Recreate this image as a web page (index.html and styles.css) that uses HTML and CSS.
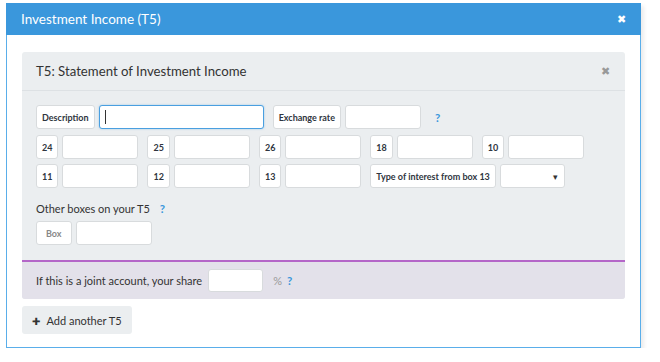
FILE: index.html
```html
<!DOCTYPE html>
<html lang="en">
<head>
    <meta charset="UTF-8">
    <meta name="viewport" content="width=device-width, initial-scale=1.0">
    <title>Investment Income (T5)</title>
    <link rel="stylesheet" href="styles.css">
</head>
<body>
    <div class="dialog">
        <div class="dialog-header">
            <span class="dialog-title">Investment Income (T5)</span>
            <span class="close">&#x2716;</span>
        </div>
        <div class="dialog-body">
            <div class="panel">
                <div class="panel-header">
                    <span>T5: Statement of Investment Income</span>
                    <span class="close grey">&#x2716;</span>
                </div>
                <div class="panel-body">
                    <div class="row first">
                        <div class="group">
                            <span class="tag">Description</span>
                            <span class="field wide focus"><span class="caret"></span></span>
                        </div>
                        <div class="group">
                            <span class="tag">Exchange rate</span>
                            <span class="field"></span>
                        </div>
                        <span class="help">?</span>
                    </div>
                    <div class="row">
                        <div class="group"><span class="tag">24</span><span class="field"></span></div>
                        <div class="group"><span class="tag">25</span><span class="field"></span></div>
                        <div class="group"><span class="tag">26</span><span class="field"></span></div>
                        <div class="group"><span class="tag">18</span><span class="field"></span></div>
                        <div class="group"><span class="tag">10</span><span class="field"></span></div>
                    </div>
                    <div class="row">
                        <div class="group"><span class="tag">11</span><span class="field"></span></div>
                        <div class="group"><span class="tag">12</span><span class="field"></span></div>
                        <div class="group"><span class="tag">13</span><span class="field"></span></div>
                        <div class="group">
                            <span class="tag">Type of interest from box 13</span>
                            <span class="field select"><span class="arrow">&#9662;</span></span>
                        </div>
                    </div>
                    <div class="other">Other boxes on your T5 <span class="help">?</span></div>
                    <div class="row last">
                        <div class="group"><span class="tag muted">Box</span><span class="field"></span></div>
                    </div>
                </div>
                <div class="panel-footer">
                    <span>If this is a joint account, your share</span>
                    <span class="field share"></span>
                    <span class="pct">%</span>
                    <span class="help">?</span>
                </div>
            </div>
            <button class="add-btn"><span class="plus">&#x271A;</span> Add another T5</button>
        </div>
    </div>
</body>
</html>
```

FILE: styles.css
```css
body {
    margin: 0;
    padding: 3px 0 0 6px;
    font-family: Lato, "Open Sans", sans-serif;
    background: #fff;
    color: #333;
}

.dialog {
    width: 635px;
    height: 345px;
    border: 1px solid #5aaeea;
    border-top: none;
    box-shadow: 3px 3px 4px rgba(0,0,0,0.08);
    box-sizing: border-box;
    display: flex;
    flex-direction: column;
}

.dialog-header {
    background: #3a97dc;
    color: #fff;
    height: 32px;
    display: flex;
    align-items: center;
    justify-content: space-between;
    padding: 0 15px 0 15px;
    margin: 0 -1px;
}

.dialog-title {
    font-size: 13.5px;
}

.close {
    font-size: 11px;
    color: #fff;
}

.close.grey {
    color: #999;
}

.dialog-body {
    padding: 17px 15px 0 15px;
}

.panel {
    background: #ebeef0;
    border-radius: 3px;
}

.panel-header {
    height: 38px;
    display: flex;
    align-items: center;
    justify-content: space-between;
    padding: 0 15px 0 14px;
    font-size: 13.2px;
    border-bottom: 1px solid #dde1e4;
}

.panel-body {
    padding: 14px 14px 15px 14px;
}

.row {
    display: flex;
    align-items: center;
    margin-bottom: 5px;
}

.row.first {
    margin-bottom: 6px;
}

.row.last {
    margin-bottom: 0;
}

.group {
    display: flex;
    gap: 4px;
    margin-right: 9px;
}

.tag {
    height: 24px;
    box-sizing: border-box;
    padding: 0 5px;
    background: #fff;
    border: 1px solid #d8dbdd;
    border-radius: 3px;
    font-size: 9px;
    font-weight: bold;
    color: #2f3540;
    display: flex;
    align-items: center;
}

.tag.muted {
    color: #888;
    padding: 0 9px;
}

.field {
    width: 76px;
    height: 24px;
    box-sizing: border-box;
    background: #fff;
    border: 1px solid #d8dbdd;
    border-radius: 3px;
    display: flex;
    align-items: center;
}

.field.wide {
    width: 165px;
}

.field.focus {
    border-color: #4a9fe0;
    box-shadow: 0 0 2px rgba(74,159,224,0.5);
}

.caret {
    width: 1px;
    height: 14px;
    background: #333;
    margin-left: 5px;
}

.field.select {
    width: 65px;
    justify-content: flex-end;
    padding-right: 6px;
}

.arrow {
    font-size: 9px;
    color: #333;
}

.help {
    color: #3a97dc;
    font-size: 11.5px;
    font-weight: bold;
    margin-left: 5px;
}

.other {
    font-size: 11px;
    margin: 14px 0 6px 0;
}

.other .help {
    margin-left: 7px;
}

.panel-footer {
    background: #e3e1ea;
    border-top: 2px solid #b466c8;
    height: 37px;
    display: flex;
    align-items: center;
    padding: 0 14px;
    font-size: 11px;
    border-radius: 0 0 3px 3px;
}

.field.share {
    width: 55px;
    height: 23px;
    margin-left: 6px;
}

.pct {
    color: #999;
    margin-left: 10px;
    font-size: 11px;
}

.add-btn {
    margin-top: 7px;
    background: #ebeef0;
    border: none;
    border-radius: 3px;
    height: 28px;
    padding: 0 10px;
    font-family: Lato, "Open Sans", sans-serif;
    font-size: 11px;
    color: #333;
}

.plus {
    font-size: 10px;
    margin-right: 4px;
}
```
